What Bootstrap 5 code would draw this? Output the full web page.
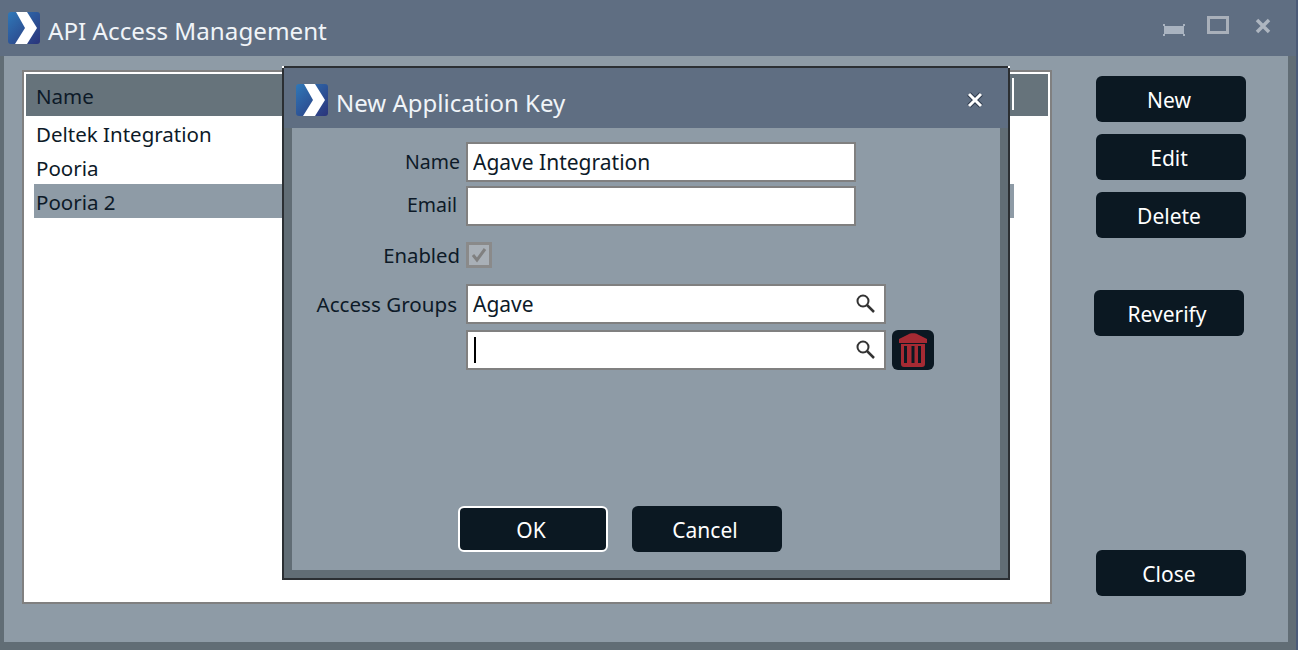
<!DOCTYPE html>
<html lang="en">
<head>
<meta charset="utf-8">
<title>API Access Management</title>
<link href="https://cdn.jsdelivr.net/npm/bootstrap@5.3.0/dist/css/bootstrap.min.css" rel="stylesheet">
<style>
html,body{height:650px;overflow:hidden}
body{background:#4b5b78;font-family:"Noto Sans","Liberation Sans",sans-serif;font-size:20.500px;color:#0d1a28;margin:0}
.win{width:1296px;height:650px;position:relative;background:#616d75}
.win-title{height:56px;background:#5f6e82;color:#f0f4f8;padding-left:8px;font-size:24.200px}
.logo{margin-right:8px;flex-shrink:0}
.win-text{margin-top:6px}
.dlg-text{margin-top:9px}
.dlg-logo{margin-top:4px}
.win-ctl{padding:16px 25px 0 0;gap:22px;align-self:flex-start}
.ctl-min{margin-top:8px}
.ctl-x{margin:2px 0 0 4px}
.win-body{height:586px;margin:0 8px 0 4px;background:#8e9ba6;padding:14px 0 0 18px}
.list-box{width:1030px;height:534px;border:2px solid #808080;background:#fff;padding:2px 2px 0 2px}
.list-head{height:42px;background:#66737b;padding-left:10px}
.head-text{margin-top:2px}
.list-sep{width:2px;height:32px;background:#fff;margin:4px 34px 0 0;align-self:flex-start}
.row-item{height:34px;line-height:36px;margin-left:8px;margin-right:34px;padding-left:2px;overflow:hidden}
.row-item.sel{background:#8e9ba6}
.side{margin-left:44px;width:150px;height:526px;padding-top:6px}
.act{width:150px;height:46px;background:#0b1822;color:#fff;border:0;border-radius:6px;font-size:21px;padding:0 4px 0 0;line-height:48px;font-family:inherit}
.act:hover,.act:focus,.act:active{background:#0b1822!important;color:#fff!important}
.act-def{border:2px solid #fff;line-height:44px}
.act-def:hover{border-color:#fff}
.gap12{gap:12px}
.shift{margin-left:-2px;margin-top:40px}
.dlg{position:absolute;left:282px;top:66px;width:728px;height:514px;border:2px solid #2b2f33;background:#616d75}
.dlg::before,.dlg::after{content:"";position:absolute;top:-2px;width:2px;height:2px;background:#fff}
.dlg::before{left:-2px}
.dlg::after{right:-2px}
.dlg-title{height:60px;background:#5f6e82;color:#f0f4f8;padding:0 25px 0 12px;font-size:24px}
.dlg-body{margin:0 8px;height:442px;background:#8e9ba6;padding-top:14px}
.fld-row{height:40px}
.fld-row+.fld-row{margin-top:4px}
.fld-lab{width:174px;text-align:right;padding-right:6px;line-height:40px;flex-shrink:0;font-size:20.300px}
.fld-lab.lab-in{padding-right:9px}
.lab-short{font-size:19.500px}
.lab-email{line-height:38px}
.lab-wide{font-size:20.600px}
.fld{height:40px;border:2px solid #808080;background:#fff;padding:0 7px 0 5px;font-size:21px}
.w-name{width:390px}
.w-grp{width:420px}
.fld input{border:0;outline:0;padding:0;background:transparent;font:inherit;color:#0d1a28;min-width:0;flex:1;height:100%}
.caret-bar{width:2px;height:26px;background:#000;margin:0 -1px 0 1px}
.chk-row{margin-top:16px;height:26px}
.form-check-input.chk,.form-check-input.chk:checked{width:26px;height:26px;margin:0;border:3px solid #8a8a8a;border-radius:0;background-color:#a9b0b7;opacity:1;
background-image:url("data:image/svg+xml,%3Csvg xmlns='http://www.w3.org/2000/svg' viewBox='0 0 20 20'%3E%3Cpath d='M4 10l4 5 8-11' fill='none' stroke='%23808080' stroke-width='3'/%3E%3C/svg%3E");background-size:100%;appearance:none;display:block}
.grp1{margin-top:16px}
.grp2{margin-top:6px!important}
.trash{width:42px;height:40px;background:#0b1822;border:0;border-radius:6px;margin-left:6px;padding:0}
.dlg-foot{margin-top:136px;padding-left:166px;gap:24px}
</style>
</head>
<body>
<div class="win">
  <div class="win-title d-flex align-items-center">
    <svg class="logo" width="32" height="32" viewBox="0 0 32 32"><defs><linearGradient id="g1" x1="0" x2="1" y1="0" y2="1"><stop offset="0" stop-color="#2f78b8"/><stop offset="1" stop-color="#2b347a"/></linearGradient></defs><rect width="32" height="32" rx="3" fill="url(#g1)"/><path d="M8 0H19L29 16 19 32H7L17 16Z" fill="#fff"/></svg>
    <span class="win-text flex-grow-1">API Access Management</span>
    <div class="win-ctl d-flex align-items-start">
      <svg class="ctl-min" width="22" height="12" viewBox="0 0 22 12"><path d="M0 0h2v2h18V0h2v2h-1v8h1v2h-2v-2H2v2H0v-2h1V2H0z" fill="#a9b3c0"/></svg>
      <svg width="22" height="18" viewBox="0 0 22 18"><rect x="1.500" y="1.500" width="19" height="15" fill="none" stroke="#a9b0ba" stroke-width="3"/></svg>
      <svg class="ctl-x" width="16" height="16" viewBox="0 0 16 16"><path d="M2 2l12 12M14 2L2 14" stroke="#aeb6c0" stroke-width="3.500" fill="none"/></svg>
    </div>
  </div>
  <div class="win-body d-flex align-items-start">
    <div class="list-box flex-shrink-0">
      <div class="list-head d-flex justify-content-between align-items-center"><span class="head-text">Name</span><span class="list-sep"></span></div>
      <div class="row-item">Deltek Integration</div>
      <div class="row-item">Pooria</div>
      <div class="row-item sel">Pooria 2</div>
    </div>
    <div class="side d-flex flex-column gap12">
      <button class="btn act" type="button">New</button>
      <button class="btn act" type="button">Edit</button>
      <button class="btn act" type="button">Delete</button>
      <button class="btn act shift flex-shrink-0" type="button">Reverify</button>
      <button class="btn act mt-auto" type="button">Close</button>
    </div>
  </div>

  <div class="dlg">
    <div class="dlg-title d-flex align-items-center">
      <svg class="logo dlg-logo" width="32" height="32" viewBox="0 0 32 32"><rect width="32" height="32" rx="3" fill="url(#g1)"/><path d="M8 0H19L29 16 19 32H7L17 16Z" fill="#fff"/></svg>
      <span class="dlg-text flex-grow-1">New Application Key</span>
      <svg class="dlg-logo" width="16" height="16" viewBox="0 0 16 16"><path d="M2 2l12 12M14 2L2 14" stroke="#2e3a4c" stroke-width="5" fill="none"/><path d="M2 2l12 12M14 2L2 14" stroke="#fff" stroke-width="3" fill="none"/></svg>
    </div>
    <div class="dlg-body">
      <div class="fld-row d-flex"><div class="fld-lab lab-short">Name</div><div class="fld w-name d-flex align-items-center"><input type="text" value="Agave Integration" aria-label="Name"></div></div>
      <div class="fld-row d-flex"><div class="fld-lab lab-in lab-short lab-email">Email</div><div class="fld w-name d-flex align-items-center"><input type="text" aria-label="Email"></div></div>
      <div class="chk-row d-flex align-items-center"><div class="fld-lab">Enabled</div><input class="form-check-input chk" type="checkbox" checked disabled aria-label="Enabled"></div>
      <div class="fld-row grp1 d-flex"><div class="fld-lab lab-in lab-wide">Access Groups</div><div class="fld w-grp d-flex align-items-center"><input type="text" value="Agave" aria-label="Access group">
        <svg width="22" height="22" viewBox="0 0 22 22"><circle cx="8" cy="8" r="5.500" fill="none" stroke="#333" stroke-width="2"/><path d="M12 12l7 7" stroke="#333" stroke-width="2.500"/></svg></div></div>
      <div class="fld-row grp2 d-flex"><div class="fld-lab"></div><div class="fld w-grp d-flex align-items-center"><span class="caret-bar"></span><input type="text" aria-label="Access group 2">
        <svg width="22" height="22" viewBox="0 0 22 22"><circle cx="8" cy="8" r="5.500" fill="none" stroke="#333" stroke-width="2"/><path d="M12 12l7 7" stroke="#333" stroke-width="2.500"/></svg></div>
        <button class="trash d-flex align-items-center justify-content-center" type="button" aria-label="Remove"><svg width="28" height="34" viewBox="0 0 28 34"><path d="M10 1c0-1 8-1 8 0l10 5v4H0V6z" fill="#a52a33"/><path d="M2 11h24v20c0 2-1 3-3 3H5c-2 0-3-1-3-3zM5 13v17h3V13zM12.500 13v17h3V13zM19 13v17h3V13z" fill="#a52a33" fill-rule="evenodd"/></svg></button></div>
      <div class="dlg-foot d-flex">
        <button class="btn act act-def" type="button">OK</button>
        <button class="btn act" type="button">Cancel</button>
      </div>
    </div>
  </div>
</div>
<script src="https://cdn.jsdelivr.net/npm/bootstrap@5.3.0/dist/js/bootstrap.bundle.min.js"></script>
</body>
</html>
